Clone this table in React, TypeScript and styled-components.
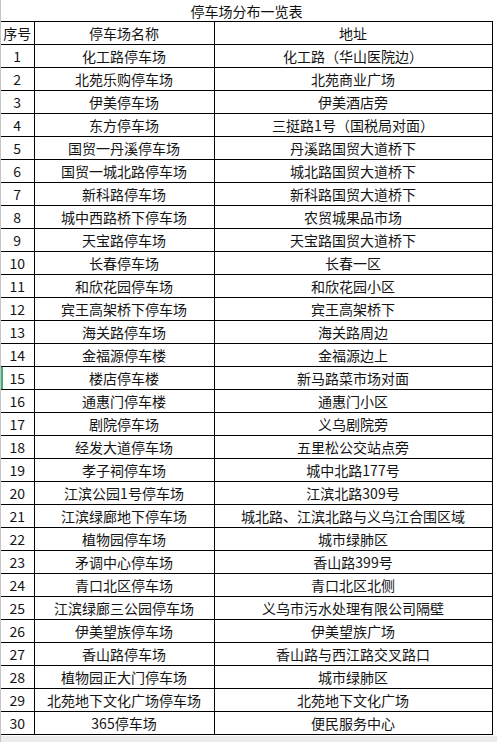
import React from "react";
import styled, { createGlobalStyle } from "styled-components";

const GlobalStyle = createGlobalStyle`
  html, body {
    margin: 0;
    padding: 0;
    background: #ffffff;
  }
  body {
    font-family: "Noto Sans CJK SC", "Noto Sans", sans-serif;
    color: #111;
  }
`;

const Sheet = styled.div`
  width: 497px;
  height: 742px;
  overflow: hidden;
  display: flex;
  flex-direction: column;
  background: #fff;
  border-left: 1px solid #c4c4c4;
  box-sizing: border-box;
`;

const Title = styled.div`
  width: 491px;
  height: 21px;
  line-height: 23px;
  text-align: center;
  font-size: 14px;
  color: #111;
`;

const Table = styled.table`
  border-collapse: collapse;
  table-layout: fixed;
  width: 491px;
  border-top: 1px solid #000;
  border-right: 1px solid #000;
  border-bottom: 1px solid #000;
`;

const Cell = styled.td<{ $marked?: boolean }>`
  height: 22px;
  padding: 0;
  line-height: 22px;
  font-size: 14px;
  text-align: center;
  white-space: nowrap;
  overflow: hidden;
  color: #141414;
  border-bottom: 1px solid #000;
  border-left: 1px solid #000;
  box-shadow: ${({ $marked }) => ($marked ? "inset 2px 0 0 #3fae74" : "none")};

  &:first-child {
    border-left: none;
  }
`;

const Footer = styled.div`
  flex: 1;
  background: #ececec;
  margin-top: 1px;
`;

const rows: [string, string][] = [
  ["化工路停车场", "化工路（华山医院边）"],
  ["北苑乐购停车场", "北苑商业广场"],
  ["伊美停车场", "伊美酒店旁"],
  ["东方停车场", "三挺路1号（国税局对面）"],
  ["国贸一丹溪停车场", "丹溪路国贸大道桥下"],
  ["国贸一城北路停车场", "城北路国贸大道桥下"],
  ["新科路停车场", "新科路国贸大道桥下"],
  ["城中西路桥下停车场", "农贸城果品市场"],
  ["天宝路停车场", "天宝路国贸大道桥下"],
  ["长春停车场", "长春一区"],
  ["和欣花园停车场", "和欣花园小区"],
  ["宾王高架桥下停车场", "宾王高架桥下"],
  ["海关路停车场", "海关路周边"],
  ["金福源停车楼", "金福源边上"],
  ["楼店停车楼", "新马路菜市场对面"],
  ["通惠门停车楼", "通惠门小区"],
  ["剧院停车场", "义乌剧院旁"],
  ["经发大道停车场", "五里松公交站点旁"],
  ["孝子祠停车场", "城中北路177号"],
  ["江滨公园1号停车场", "江滨北路309号"],
  ["江滨绿廊地下停车场", "城北路、江滨北路与义乌江合围区域"],
  ["植物园停车场", "城市绿肺区"],
  ["矛调中心停车场", "香山路399号"],
  ["青口北区停车场", "青口北区北侧"],
  ["江滨绿廊三公园停车场", "义乌市污水处理有限公司隔壁"],
  ["伊美望族停车场", "伊美望族广场"],
  ["香山路停车场", "香山路与西江路交叉路口"],
  ["植物园正大门停车场", "城市绿肺区"],
  ["北苑地下文化广场停车场", "北苑地下文化广场"],
  ["365停车场", "便民服务中心"],
];

const App: React.FC = () => {
  return (
    <>
      <GlobalStyle />
      <Sheet>
        <Title>停车场分布一览表</Title>
        <Table>
          <colgroup>
            <col style={{ width: 33 }} />
            <col style={{ width: 180 }} />
            <col style={{ width: 278 }} />
          </colgroup>
          <tbody>
            <tr>
              <Cell>序号</Cell>
              <Cell>停车场名称</Cell>
              <Cell>地址</Cell>
            </tr>
            {rows.map(([name, address], i) => (
              <tr key={i}>
                <Cell $marked={i + 1 === 15}>{i + 1}</Cell>
                <Cell>{name}</Cell>
                <Cell>{address}</Cell>
              </tr>
            ))}
          </tbody>
        </Table>
        <Footer />
      </Sheet>
    </>
  );
};

export default App;
